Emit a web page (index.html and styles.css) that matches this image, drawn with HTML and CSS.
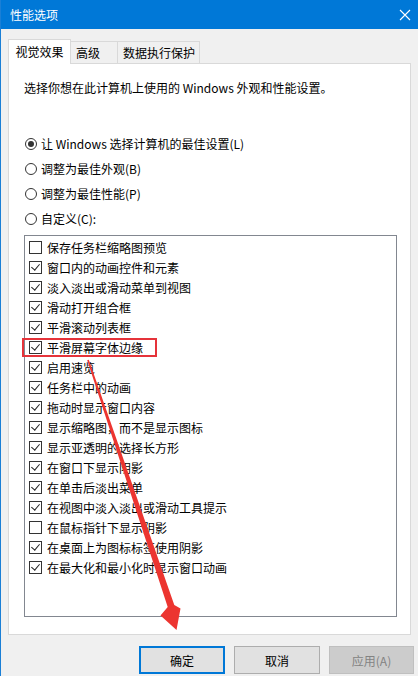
FILE: index.html
```html
<!DOCTYPE html>
<html lang="zh-CN">
<head>
<meta charset="utf-8">
<title>性能选项</title>
<link rel="stylesheet" href="styles.css">
</head>
<body>
<div class="window">
  <div class="titlebar">
    <span class="title">性能选项</span>
    <svg class="close" width="12" height="12" viewBox="0 0 12 12"><path d="M1 1L11 11M11 1L1 11" stroke="#fff" stroke-width="1.1" fill="none"/></svg>
  </div>
  <div class="tabs">
    <div class="tab active">视觉效果</div>
    <div class="tab t2">高级</div>
    <div class="tab t3">数据执行保护</div>
  </div>
  <div class="panel">
    <p class="desc">选择你想在此计算机上使用的 Windows 外观和性能设置。</p>
    <div class="radios">
      <div class="radio-row"><span class="radio checked"></span><span>让 Windows 选择计算机的最佳设置(L)</span></div>
      <div class="radio-row"><span class="radio"></span><span>调整为最佳外观(B)</span></div>
      <div class="radio-row"><span class="radio"></span><span>调整为最佳性能(P)</span></div>
      <div class="radio-row"><span class="radio"></span><span>自定义(C):</span></div>
    </div>
    <div class="listbox">
      <div class="item"><span class="cb"></span><span>保存任务栏缩略图预览</span></div>
      <div class="item"><span class="cb on"></span><span>窗口内的动画控件和元素</span></div>
      <div class="item"><span class="cb on"></span><span>淡入淡出或滑动菜单到视图</span></div>
      <div class="item"><span class="cb on"></span><span>滑动打开组合框</span></div>
      <div class="item"><span class="cb on"></span><span>平滑滚动列表框</span></div>
      <div class="item marked"><span class="cb on"></span><span>平滑屏幕字体边缘</span><span class="redbox"></span></div>
      <div class="item"><span class="cb on"></span><span>启用速览</span></div>
      <div class="item"><span class="cb on"></span><span>任务栏中的动画</span></div>
      <div class="item"><span class="cb on"></span><span>拖动时显示窗口内容</span></div>
      <div class="item"><span class="cb on"></span><span>显示缩略图，而不是显示图标</span></div>
      <div class="item"><span class="cb on"></span><span>显示亚透明的选择长方形</span></div>
      <div class="item"><span class="cb on"></span><span>在窗口下显示阴影</span></div>
      <div class="item"><span class="cb on"></span><span>在单击后淡出菜单</span></div>
      <div class="item"><span class="cb on"></span><span>在视图中淡入淡出或滑动工具提示</span></div>
      <div class="item"><span class="cb"></span><span>在鼠标指针下显示阴影</span></div>
      <div class="item"><span class="cb on"></span><span>在桌面上为图标标签使用阴影</span></div>
      <div class="item"><span class="cb on"></span><span>在最大化和最小化时显示窗口动画</span></div>
    </div>
  </div>
  <div class="buttons">
    <button class="btn default">确定</button>
    <button class="btn">取消</button>
    <button class="btn disabled">应用(A)</button>
  </div>
</div>
<svg class="arrow" width="418" height="676" viewBox="0 0 418 676">
  <polygon fill="#ec3530" points="88.8,359.7 174.3,604.9 180.5,608.5 176.5,630 160.5,615.5 167.7,607.1 87.2,360.3"/>
</svg>
</body>
</html>
```
FILE: styles.css
```css
html, body {
  margin: 0;
  padding: 0;
}
body {
  width: 418px;
  height: 676px;
  overflow: hidden;
  background: #f0f0f0;
  font-family: "Noto Sans CJK SC", "Microsoft YaHei", sans-serif;
  font-size: 12px;
  color: #000;
  position: relative;
}
.window {
  height: 676px;
  border-left: 1px solid #1a7fd6;
  box-sizing: border-box;
}
.titlebar {
  height: 29px;
  background: #0078d7;
  color: #fff;
  display: flex;
  align-items: center;
  justify-content: space-between;
  padding: 0 7px 0 9px;
}
.title {
  font-size: 12px;
  line-height: 16px;
}
.close {
  display: block;
}
.tabs {
  display: flex;
  align-items: flex-end;
  margin-top: 10px;
  padding-left: 7px;
  height: 24px;
  position: relative;
  z-index: 1;
}
.tab {
  box-sizing: border-box;
  height: 22px;
  border: 1px solid #d9d9d9;
  border-bottom: none;
  background: #f0f0f0;
  line-height: 21px;
  padding-left: 5px;
  white-space: nowrap;
}
.tab.active {
  height: 25px;
  width: 63px;
  background: #fff;
  text-align: center;
  padding-left: 0;
  line-height: 24px;
  margin-bottom: -1px;
}
.tab.t2 {
  width: 47px;
  border-left: none;
}
.tab.t3 {
  width: 82px;
  border-left: none;
}
.panel {
  box-sizing: border-box;
  margin-left: 7px;
  width: 403px;
  height: 572px;
  background: #fff;
  border: 1px solid #d9d9d9;
  padding: 16px 0 0 15px;
}
.desc {
  margin: 0;
  line-height: 16px;
}
.radios {
  margin-top: 35px;
}
.radio-row {
  height: 25px;
  display: flex;
  align-items: center;
  padding-left: 1px;
}
.radio {
  box-sizing: border-box;
  width: 12px;
  height: 12px;
  border: 1px solid #333;
  border-radius: 50%;
  margin-right: 4px;
  position: relative;
  flex: none;
}
.radio.checked::after {
  content: "";
  position: absolute;
  left: 2px;
  top: 2px;
  width: 6px;
  height: 6px;
  border-radius: 50%;
  background: #333;
}
.listbox {
  box-sizing: border-box;
  margin-top: 4px;
  width: 373px;
  height: 382px;
  border: 1px solid #828790;
  padding: 1px 0 0 4px;
}
.item {
  height: 20px;
  display: flex;
  align-items: center;
  position: relative;
  white-space: nowrap;
}
.cb {
  box-sizing: border-box;
  width: 13px;
  height: 13px;
  border: 1px solid #333;
  margin-right: 5px;
  position: relative;
  flex: none;
}
.cb.on::after {
  content: "";
  position: absolute;
  left: 3px;
  top: 0px;
  width: 4px;
  height: 7px;
  border-right: 1.3px solid #222;
  border-bottom: 1.3px solid #222;
  transform: rotate(40deg);
}
.redbox {
  position: absolute;
  left: -7px;
  top: 1px;
  width: 135px;
  height: 19px;
  box-sizing: border-box;
  border: 2px solid #e5333a;
}
.buttons {
  display: flex;
  justify-content: flex-end;
  gap: 9px;
  padding-right: 4px;
  margin-top: 11px;
}
.btn {
  box-sizing: border-box;
  width: 86px;
  height: 28px;
  font-family: inherit;
  font-size: 12px;
  background: #e1e1e1;
  border: 1px solid #adadad;
  color: #000;
  padding: 0;
  margin: 0;
}
.btn.default {
  border: 2px solid #0078d7;
}
.btn.disabled {
  background: #cccccc;
  border-color: #bfbfbf;
  color: #838383;
  width: 85px;
}
.arrow {
  position: absolute;
  left: 0;
  top: 0;
  pointer-events: none;
}
```
